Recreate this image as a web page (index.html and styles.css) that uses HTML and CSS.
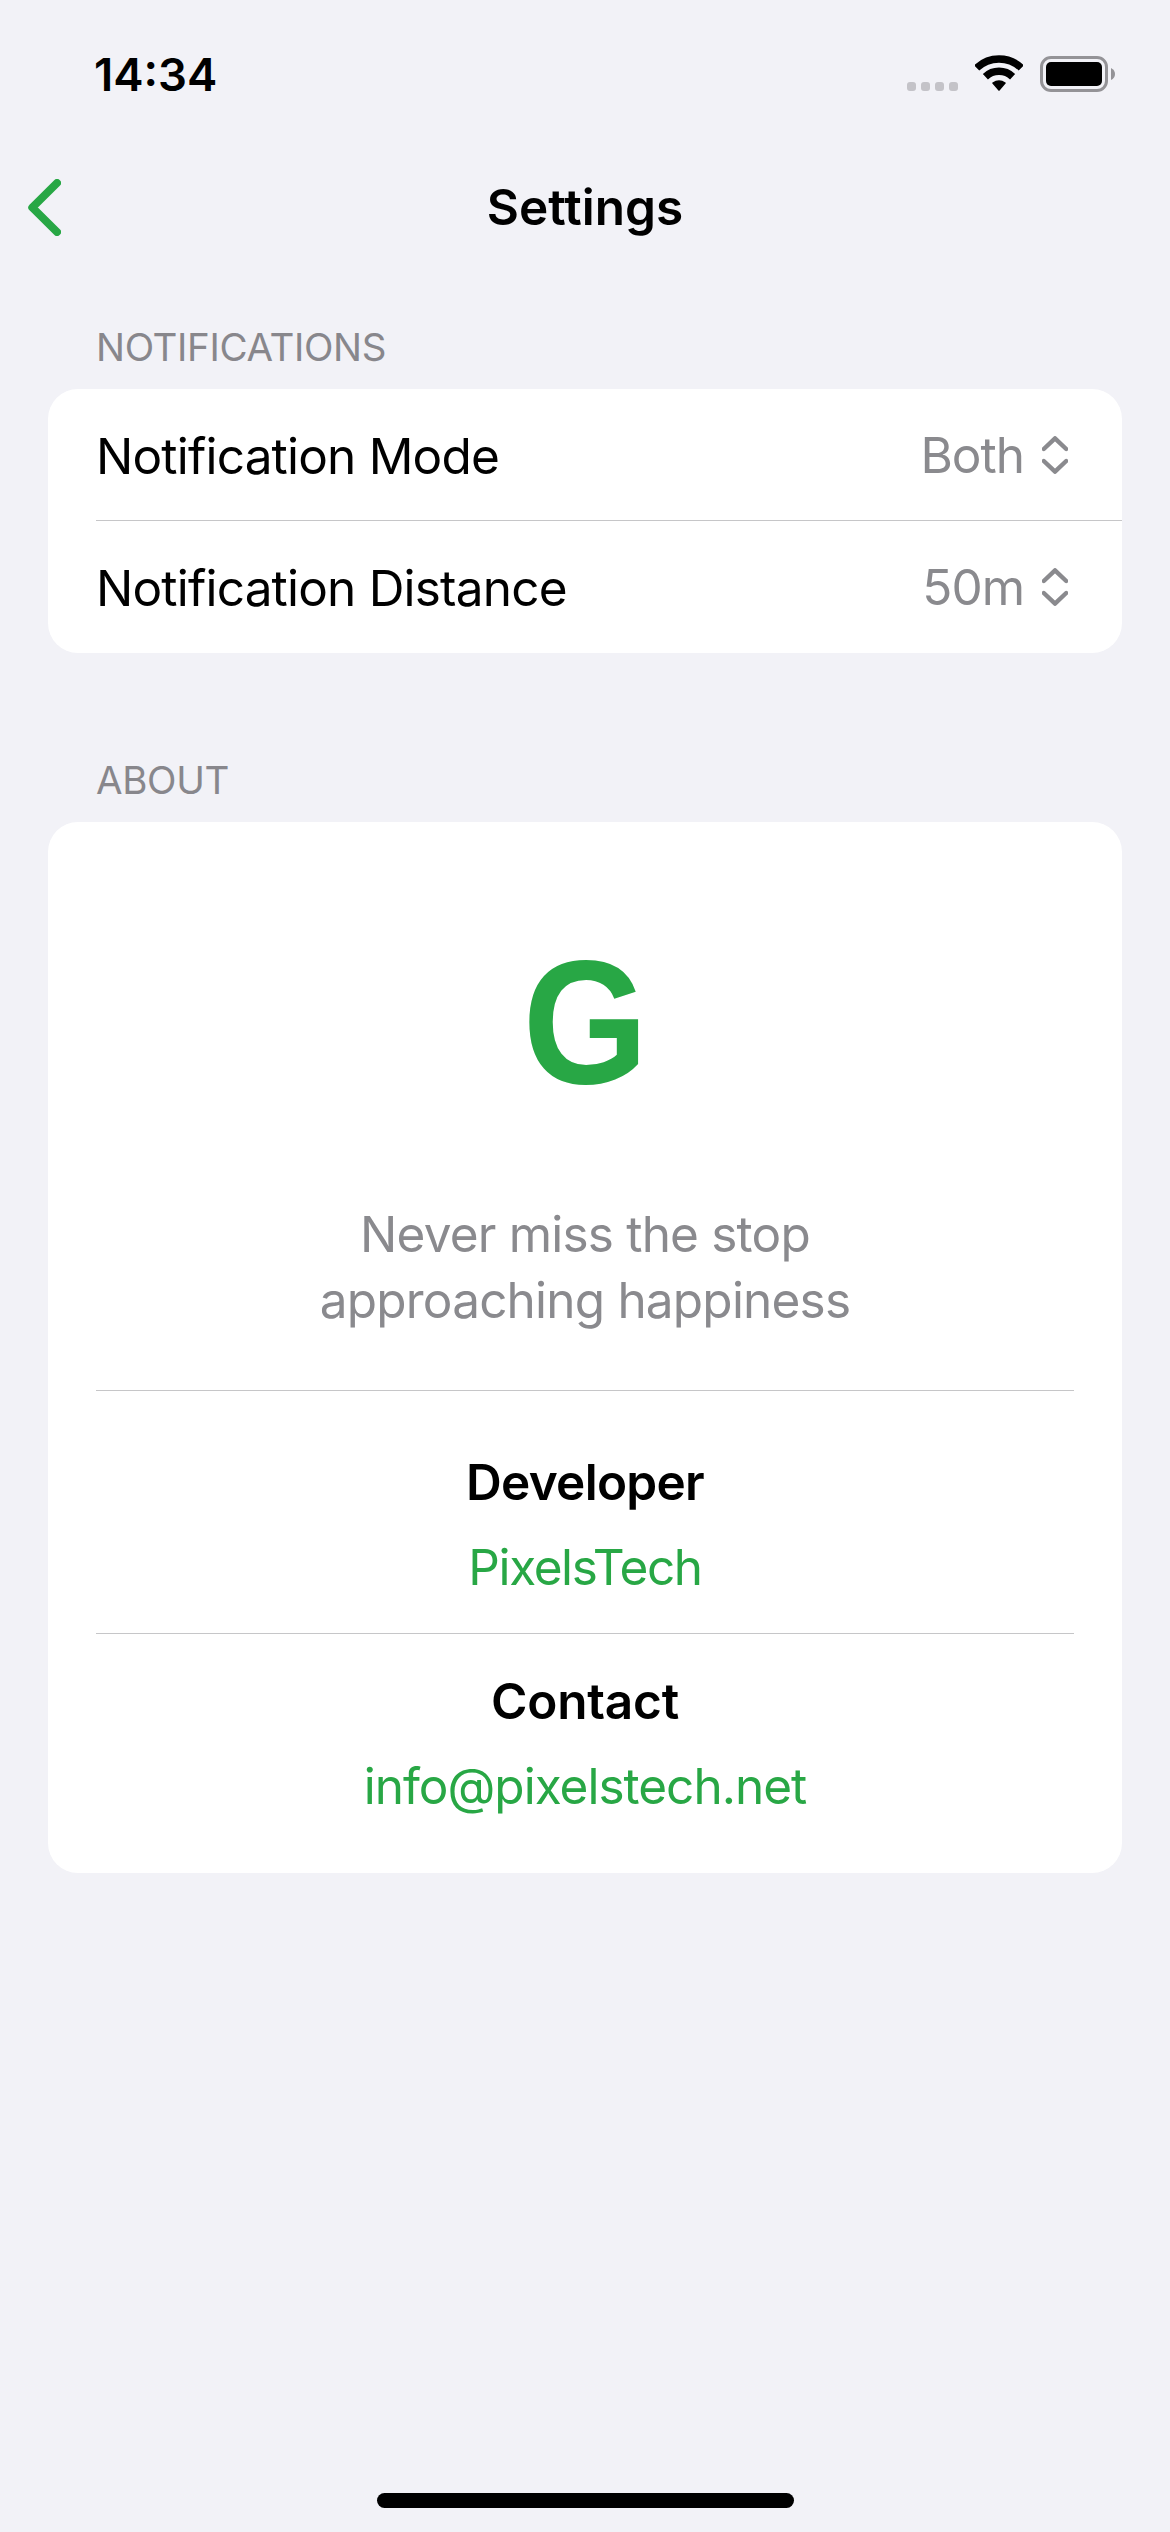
FILE: index.html
```html
<!DOCTYPE html>
<html lang="en">
<head>
    <meta charset="UTF-8">
    <meta name="viewport" content="width=device-width, initial-scale=1.0">
    <title>Settings</title>
    <link rel="stylesheet" href="styles.css">
</head>
<body>

    <!-- Status bar -->
    <div class="status-bar">
        <span class="time">14:34</span>
        <div class="status-icons">
            <div class="signal">
                <span></span><span></span><span></span><span></span>
            </div>
            <svg class="wifi" width="48" height="36" viewBox="0 0 48 36">
                <path d="M1.7 12.9 A32.2 32.2 0 0 1 46.3 12.9" fill="none" stroke="#000" stroke-width="7.4"/>
                <path d="M10.4 21.7 A19.8 19.8 0 0 1 37.6 21.7" fill="none" stroke="#000" stroke-width="7.4"/>
                <path d="M17.4 28.6 Q16.8 28 17.5 27.5 A11.4 11.4 0 0 1 30.5 27.5 Q31.2 28 30.6 28.6 L24.6 35.5 Q24 36 23.4 35.5 Z"/>
            </svg>
            <svg class="battery" width="75" height="36" viewBox="0 0 75 36">
                <rect x="1.5" y="1.5" width="65" height="33" rx="9.5" fill="none" stroke="#949397" stroke-width="3"/>
                <rect x="6" y="6" width="56" height="24" rx="5"/>
                <path d="M71 12 Q75 14 75 18 Q75 22 71 24 Z" fill="#949397"/>
            </svg>
        </div>
    </div>

    <!-- Navigation -->
    <div class="nav-bar">
        <a class="back" href="#" aria-label="Back">
            <svg width="33" height="57" viewBox="0 0 33 57">
                <path d="M29 4 L4.3 28.5 L29 53" fill="none" stroke="#28a745" stroke-width="8" stroke-linecap="round" stroke-linejoin="round"/>
            </svg>
        </a>
        <h1>Settings</h1>
    </div>

    <!-- Notifications -->
    <div class="section">
        <h2>NOTIFICATIONS</h2>
        <div class="card">
            <div class="row">
                <span class="label">Notification Mode</span>
                <span class="value">Both</span>
                <svg class="picker" width="26" height="38" viewBox="0 0 26 38">
                    <path d="M1.8 13 L13 2.3 L24.2 13 M1.8 25 L13 35.7 L24.2 25"/>
                </svg>
            </div>
            <div class="row">
                <span class="label">Notification Distance</span>
                <span class="value">50m</span>
                <svg class="picker" width="26" height="38" viewBox="0 0 26 38">
                    <path d="M1.8 13 L13 2.3 L24.2 13 M1.8 25 L13 35.7 L24.2 25"/>
                </svg>
            </div>
        </div>
    </div>

    <!-- About -->
    <div class="section about">
        <h2>ABOUT</h2>
        <div class="card">
            <div class="intro">
                <div class="logo">G</div>
                <p>Never miss the stop<br>approaching happiness</p>
            </div>
            <div class="info developer">
                <h3>Developer</h3>
                <a href="#">PixelsTech</a>
            </div>
            <div class="info contact">
                <h3>Contact</h3>
                <a href="#">info@pixelstech.net</a>
            </div>
        </div>
    </div>

    <div class="home-indicator"></div>

</body>
</html>
```

FILE: styles.css
```css
* {
    box-sizing: border-box;
}

body {
    display: flex;
    flex-direction: column;
    min-height: 2532px;
    margin: 0;
    background-color: #f2f2f7;
    color: #000;
    font-family: Inter, "Liberation Sans", sans-serif;
    font-size: 49.5px;
    line-height: 60px;
    letter-spacing: -0.8px;
}

h1, h2, h3, p {
    margin: 0;
}

a {
    color: #28a745;
    text-decoration: none;
}

/* status bar */
.status-bar {
    display: flex;
    justify-content: space-between;
    height: 141px;
    padding: 44px 55px 0 94px;
}

.time {
    padding-top: 1px;
    font-size: 45.5px;
    font-weight: 600;
    letter-spacing: 0;
}

.status-icons {
    display: flex;
    align-items: flex-end;
    gap: 17px;
    height: 48px;
}

.signal {
    display: flex;
    gap: 5px;
    padding-bottom: 1px;
}

.signal span {
    width: 9px;
    height: 9px;
    border-radius: 3px;
    background-color: #c4c3c8;
}

.wifi {
    margin-bottom: 1px;
}

/* navigation */
.nav-bar {
    display: grid;
    grid-template-columns: 200px 1fr 200px;
    align-items: center;
    height: 132px;
    margin-bottom: 51px;
}

.back {
    display: flex;
    padding-left: 28px;
}

h1 {
    font-size: 49.5px;
    font-weight: 600;
    letter-spacing: 0;
    text-align: center;
}

/* sections */
.section {
    margin: 0 48px;
}

.section.about {
    margin-top: 104px;
}

h2 {
    margin: 0 48px 19px;
    color: #88878c;
    font-size: 38.5px;
    font-weight: 400;
    line-height: 46px;
    letter-spacing: -0.35px;
}

.card {
    border-radius: 30px;
    background-color: #fff;
}

.row {
    display: flex;
    align-items: center;
    height: 132px;
    margin-left: 48px;
    padding-right: 54px;
}

.row:first-child {
    border-bottom: 1px solid #c6c6c8;
}

.label {
    flex: 1;
    padding-top: 2px;
}

.value {
    margin-right: 18px;
    color: #8a8a8e;
    letter-spacing: -1px;
}

.picker path {
    fill: none;
    stroke: #8a8a8e;
    stroke-width: 4.4;
    stroke-linecap: round;
    stroke-linejoin: round;
}

/* about card */
.intro, .info {
    margin: 0 48px;
    text-align: center;
}

.intro {
    padding: 110px 0 57px;
    border-bottom: 1px solid #c6c6c8;
}

.logo {
    margin-bottom: 89px;
    color: #28a745;
    font-family: "Liberation Sans", Arial, sans-serif;
    font-size: 177px;
    font-weight: bold;
    line-height: 180px;
    transform: scaleX(0.91);
}

.intro p {
    color: #8a8a8e;
    line-height: 66px;
}

.info {
    display: flex;
    flex-direction: column;
    gap: 25px;
}

.info h3 {
    font-size: 49.5px;
    font-weight: 600;
}

.developer {
    padding: 61px 0 36px;
    border-bottom: 1px solid #c6c6c8;
}

.developer h3 {
    letter-spacing: -0.7px;
}

.developer a {
    letter-spacing: -1.4px;
}

.contact {
    padding: 37px 0 57px;
}

.contact h3 {
    letter-spacing: -0.2px;
}

.contact a {
    letter-spacing: -1px;
}

/* home indicator */
.home-indicator {
    width: 417px;
    height: 15px;
    margin: auto auto 24px;
    border-radius: 8px;
    background-color: #000;
}
```
